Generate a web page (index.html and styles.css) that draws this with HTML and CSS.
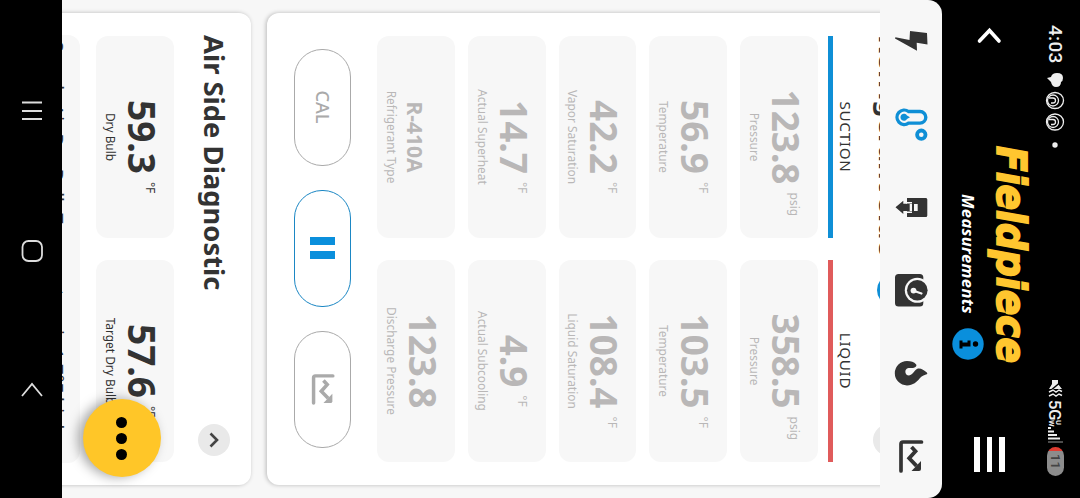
FILE: index.html
```html
<!DOCTYPE html>
<html lang="en">
<head>
    <meta charset="UTF-8">
    <title>Fieldpiece Measurements</title>
    <link rel="stylesheet" href="styles.css">
</head>
<body>
    <!-- Shared chart icon -->
    <svg class="defs" width="0" height="0">
        <symbol id="chart" viewBox="0 0 33 33">
            <path d="M31 26H4q-2 0-2-2V5.500" fill="none" stroke="currentColor" stroke-width="3.700" stroke-linecap="round" />
            <path d="M7 15.500l4.300-4 7 6.300 7.500-7.300" fill="none" stroke="currentColor" stroke-width="3.800" />
            <path d="M21 6H29q2 0 2 2V15.500z" fill="currentColor" />
        </symbol>
    </svg>

    <div class="phone">
        <div class="status">
            <span class="clock">4:03</span>
            <svg class="notif" width="86" height="20" viewBox="0 0 86 20">
                <path d="M2 8q0-6 5-6 3 0 4 2 5 0 5 5 0 4-5 5l-4 4-1-4q-4-1-4-6z" fill="#eee" />
                <g fill="none" stroke="#eee" stroke-width="1.300">
                    <ellipse cx="29.500" cy="10" rx="8" ry="8.500" />
                    <ellipse cx="29.500" cy="12" rx="5.500" ry="5.500" />
                    <path d="M27 16v-4a2.500 2.500 0 0 1 5 0v2" />
                    <ellipse cx="51" cy="10" rx="8" ry="8.500" />
                    <ellipse cx="51" cy="12" rx="5.500" ry="5.500" />
                    <path d="M48.500 16v-4a2.500 2.500 0 0 1 5 0v2" />
                </g>
                <circle cx="74" cy="10" r="2.700" fill="#eee" />
            </svg>
            <svg class="mute" width="17" height="16" viewBox="0 0 17 16">
                <path d="M0 5h4l5-4v13l-5-3H0z" fill="#eee" />
                <path d="M1 1l10 12" stroke="#000" stroke-width="1.500" />
                <path d="M11.500 1l-1.500 3 2 3-2 3 2 4M15.500 1l-1.500 3 2 3-2 3 2 4" fill="none" stroke="#eee" stroke-width="1.500" />
            </svg>
            <span class="net">5G</span>
            <span class="net-mark"><span>U</span><span>W</span></span>
            <svg class="bars" width="16" height="15" viewBox="0 0 16 15">
                <path d="M1 12v3M4.500 9v6M8 6v9M11.500 3v12" stroke="#eee" stroke-width="2" />
                <path d="M15 0v15" stroke="#666" stroke-width="1.500" />
            </svg>
            <span class="battery">11</span>
        </div>

        <div class="header">
            <svg class="back" width="18" height="26" viewBox="0 0 18 26">
                <path d="M14 3L3.500 12.500 14 22.500" fill="none" stroke="#fff" stroke-width="3.600" stroke-linecap="round" />
            </svg>
            <div class="brand">
                <svg class="logo" width="224" height="44" viewBox="0 0 224 44">
                    <text x="1" y="33" textLength="217" lengthAdjust="spacingAndGlyphs">Fieldpiece</text>
                </svg>
                <div class="subtitle">
                    <span>Measurements</span>
                    <svg width="32" height="32" viewBox="0 0 32 32">
                        <circle cx="16" cy="16" r="15.700" fill="#0a8fdc" />
                        <circle cx="16" cy="8.500" r="2.700" />
                        <path d="M12.500 13.500h6v8h2v3h-8v-3h2v-5h-2z" />
                    </svg>
                </div>
            </div>
            <div class="menu"><i></i><i></i><i></i></div>
        </div>

        <div class="panel">
            <div class="tabs">
                <svg viewBox="0 0 32 32"><path d="M8 0l11.500-.5-1.800 10.800 8-.3L13.500 32l-1.300-.4L15 17.500 6 17z" /></svg>
                <svg class="active" viewBox="0 0 32 32">
                    <path d="M3.500 18.500V7a5.800 5.800 0 0 1 11.600 0v11.500a7.200 7.200 0 1 1-11.600 0z" fill="none" stroke="currentColor" stroke-width="3.400" />
                    <path d="M9.300 17l1.700 3a3.500 3.500 0 1 1-3.400 0z" />
                    <circle cx="26.700" cy="5.700" r="4.200" fill="none" stroke="currentColor" stroke-width="3.800" />
                </svg>
                <svg viewBox="0 0 32 32">
                    <path d="M8.500-.3h16q1.500 0 1.500 1.500V20h-6v3.700h3L16.300 31.500 9.700 23.700h3V20H7V1q0-1.300 1.500-1.300z" />
                    <path d="M13 9.300h7V13h-7zM13 15h7v2.300h-7zM11 15h1.500v6H11zM20.500 15H22v6h-1.500z" fill="#f7f7f7" />
                </svg>
                <svg viewBox="0 0 32 32">
                    <rect x="0" y="3.700" width="32.500" height="28.300" rx="3.500" />
                    <circle cx="16.300" cy="9.700" r="12.500" fill="#f7f7f7" />
                    <circle cx="16.300" cy="9.700" r="10.300" />
                    <circle cx="16.600" cy="13.500" r="2.900" fill="#f7f7f7" />
                    <path d="M16.800 13.500L19.500 5.500" stroke="#f7f7f7" stroke-width="2.200" stroke-linecap="round" />
                </svg>
                <svg viewBox="0 0 32 32"><path d="M7.500 10.800C4.500 13 4 16 4 20a12.200 12.200 0 0 0 24.400 0C28.400 14 25 10 21 7 18.500 5 18 2 17.300.2q-1-1.200-1.800 0C13 3 11 6 11.500 9c.5 3 6.500 5 7 9 0 4.500-7 5-7.500.5-.3-3.500.5-5.500-1.500-7.500q-1-.8-2-.2z" /></svg>
                <svg viewBox="0 0 32 32"><use href="#chart" width="33" height="33" /></svg>
            </div>

            <div class="scroll">
                <!-- Refrigerant side -->
                <div class="card first">
                    <div class="card-head">
                        <h2>Refrigerant Side</h2>
                        <span class="dot"></span>
                        <span class="toggle"></span>
                    </div>
                    <div class="grid columns">
                        <div class="column suction">SUCTION</div>
                        <div class="column liquid">LIQUID</div>
                    </div>
                    <div class="grid tiles muted">
                        <div class="tile"><b>123.8<small>psig</small></b><span>Pressure</span></div>
                        <div class="tile"><b>358.5<small>psig</small></b><span>Pressure</span></div>
                        <div class="tile"><b>56.9<small>°F</small></b><span>Temperature</span></div>
                        <div class="tile"><b>103.5<small>°F</small></b><span>Temperature</span></div>
                        <div class="tile"><b>42.2<small>°F</small></b><span>Vapor Saturation</span></div>
                        <div class="tile"><b>108.4<small>°F</small></b><span>Liquid Saturation</span></div>
                        <div class="tile"><b>14.7<small>°F</small></b><span>Actual Superheat</span></div>
                        <div class="tile"><b>4.9<small>°F</small></b><span>Actual Subcooling</span></div>
                        <div class="tile"><b class="name">R-410A</b><span>Refrigerant Type</span></div>
                        <div class="tile"><b>123.8</b><span>Discharge Pressure</span></div>
                    </div>
                    <div class="buttons">
                        <div class="button">CAL</div>
                        <div class="button pause"><i></i><i></i></div>
                        <div class="button"><svg width="31" height="31"><use href="#chart" width="31" height="31" /></svg></div>
                    </div>
                </div>

                <!-- Air side -->
                <div class="card">
                    <div class="card-head">
                        <h2>Air Side Diagnostic</h2>
                        <span class="toggle">
                            <svg width="16" height="10" viewBox="0 0 16 10"><path d="M1.500 8.500L8 2l6.500 6.500" fill="none" stroke="#444" stroke-width="2.600" /></svg>
                        </span>
                    </div>
                    <div class="grid tiles">
                        <div class="tile"><b>59.3<small>°F</small></b><span>Dry Bulb</span></div>
                        <div class="tile"><b>57.6<small>°F</small></b><span>Target Dry Bulb</span></div>
                    </div>
                    <div class="note">Supply Air Dry Bulb Temperature is 1.7°F high</div>
                </div>
            </div>

            <div class="fab"><i></i><i></i><i></i></div>
        </div>

        <div class="navbar">
            <svg width="22" height="22" viewBox="0 0 22 22"><path d="M2.500 1v20M11 1v20M19 1v20" stroke="#ddd" stroke-width="1.800" /></svg>
            <svg width="22" height="22" viewBox="0 0 22 22"><rect x="1" y="1" width="20" height="19.500" rx="6" fill="none" stroke="#ddd" stroke-width="1.800" /></svg>
            <svg width="22" height="22" viewBox="0 0 22 22"><path d="M17 1L5 11l12 10" fill="none" stroke="#ddd" stroke-width="1.800" /></svg>
        </div>
    </div>
</body>
</html>
```

FILE: styles.css
```css
* {
    box-sizing: border-box;
}
html {
    height: 498px;
    overflow: hidden;
}
body {
    margin: 0;
    width: 1080px;
    height: 498px;
    overflow: hidden;
    background: #000;
    font-family: "Noto Sans", "Open Sans", sans-serif;
    color: #333;
}
.defs {
    position: absolute;
}
/* portrait screen turned on its side */
.phone {
    display: flex;
    flex-direction: column;
    width: 498px;
    height: 1080px;
    background: #000;
    transform-origin: 0 0;
    transform: translateX(1080px) rotate(90deg);
}

/* status bar */
.status {
    display: flex;
    align-items: center;
    height: 50px;
    padding: 0 22px 1px 25px;
    color: #eee;
    font-family: Roboto, sans-serif;
}
.clock {
    width: 44px;
    font-size: 19px;
    font-weight: 500;
    letter-spacing: .3px;
}
.notif {
    margin: 0 auto 0 2px;
}
.net {
    margin-left: 3px;
    font-size: 17px;
    font-weight: 500;
    letter-spacing: -.5px;
}
.net-mark {
    display: flex;
    flex-direction: column;
    width: 7px;
    font-size: 7.500px;
    line-height: 7px;
    font-weight: 700;
}
.battery {
    width: 29px;
    height: 17px;
    margin-left: 4px;
    border-radius: 9px;
    background: linear-gradient(90deg, #e03c31 4px, #8c8c8c 4px);
    color: #444;
    font-size: 13px;
    font-weight: 500;
    line-height: 17px;
    text-align: center;
}

/* header */
.header {
    display: flex;
    height: 88px;
    padding: 0 26px 0 27px;
}
.back {
    margin-top: 28px;
}
.brand {
    margin-left: 100px;
    width: 224px;
}
.logo {
    display: block;
    overflow: visible;
}
.logo text {
    font: italic bold 40px "DejaVu Sans", sans-serif;
    fill: #ffc62f;
    stroke: #ffc62f;
    stroke-width: 1.800;
}
.subtitle {
    display: flex;
    align-items: center;
    justify-content: space-between;
    width: 166px;
    margin: 2px 0 0 49px;
    color: #fff;
    font-size: 16.500px;
    font-weight: 700;
    font-style: italic;
    line-height: 32px;
    letter-spacing: .35px;
}
.menu {
    display: flex;
    flex-direction: column;
    gap: 7px;
    width: 35px;
    margin: 25px 0 0 auto;
}
.menu i {
    height: 5.600px;
    background: #fff;
}

/* content panel */
.panel {
    position: relative;
    height: 880px;
    border-radius: 14px 14px 0 0;
    background: #f7f7f7;
    overflow: hidden;
}
.tabs {
    display: grid;
    grid-template-columns: repeat(6, 1fr);
    align-items: center;
    justify-items: center;
    height: 62px;
    padding-right: 1px;
}
.tabs svg {
    width: 32px;
    height: 32px;
    overflow: visible;
    color: #333;
    fill: currentColor;
}
.tabs .active {
    color: #0f8fd6;
}
.scroll {
    height: 818px;
    padding: 0 13px;
    overflow: hidden;
}
.card {
    height: 400px;
    padding: 0 23px;
    border-radius: 12px;
    background: #fff;
    box-shadow: 0 1px 4px rgba(0, 0, 0, .25);
}
.card.first {
    height: 659px;
    margin: -46px 0 16px;
}
.card-head {
    display: flex;
    align-items: flex-start;
    height: 68px;
    padding: 21px 6px 0 0;
}
h2 {
    margin: -1px 0 0 -1px;
    font-size: 27.400px;
    line-height: 34px;
    font-weight: 700;
}
.dot {
    width: 32px;
    height: 32px;
    margin: -4px 0 0 18px;
    border-radius: 50%;
    background: #0f8fd6;
}
.toggle {
    display: flex;
    align-items: center;
    justify-content: center;
    width: 32px;
    height: 32px;
    margin-left: auto;
    border-radius: 50%;
    background: #e9e9e9;
}
.grid {
    display: grid;
    grid-template-columns: 1fr 1fr;
    column-gap: 22px;
}
.column {
    height: 29.500px;
    padding-top: 2px;
    border-bottom: 5.500px solid #0f8fd6;
    font-size: 15.200px;
    line-height: 21px;
    letter-spacing: .7px;
    text-align: center;
}
.liquid {
    border-color: #e05b5b;
}
.tiles {
    row-gap: 13px;
    padding-top: 9px;
}
.first .tiles {
    padding-top: 10.500px;
}
.tile {
    display: flex;
    flex-direction: column;
    align-items: center;
    height: 77.800px;
    border-radius: 12px;
    background: #f7f7f7;
}
.tile b {
    position: relative;
    height: 54px;
    font-size: 37px;
    line-height: 63px;
}
.tile .name {
    font-size: 21px;
    line-height: 80px;
}
/* the unit hangs off the value so the number stays centred */
.tile small {
    position: absolute;
    left: 100%;
    top: 15px;
    margin-left: 8px;
    font-size: 12px;
    line-height: 18px;
    font-weight: 400;
}
.tile span {
    font-size: 11.900px;
    line-height: 18px;
}
.muted {
    color: #b9b7b7;
}
.buttons {
    display: flex;
    justify-content: center;
    gap: 24px;
    margin: 26px 1px 0 -1px;
}
.button {
    display: flex;
    align-items: center;
    justify-content: center;
    gap: 6px;
    width: 117px;
    height: 57px;
    border: 1.500px solid #aaa;
    border-radius: 28px;
    color: #aaa;
    font-size: 18px;
    font-weight: 500;
}
.pause {
    border-color: #1b87c4;
}
.pause i {
    width: 8px;
    height: 25px;
    background: #0a8fdc;
}
.note {
    height: 90px;
    margin: 16px -1px 0;
    padding: 11px 6px;
    border-radius: 12px;
    background: #f7f7f7;
    font-size: 18.500px;
    line-height: 24px;
    white-space: nowrap;
}
.fab {
    position: absolute;
    left: 399px;
    top: 781px;
    display: flex;
    align-items: center;
    justify-content: center;
    gap: 5px;
    width: 78px;
    height: 78px;
    border-radius: 50%;
    background: #ffc628;
    box-shadow: 0 5px 12px rgba(0, 0, 0, .35);
}
.fab i {
    width: 11px;
    height: 11px;
    border-radius: 50%;
    background: #000;
}

/* system navigation */
.navbar {
    display: flex;
    align-items: center;
    justify-content: space-between;
    height: 62px;
    padding: 0 97px 2px 100px;
}
```
